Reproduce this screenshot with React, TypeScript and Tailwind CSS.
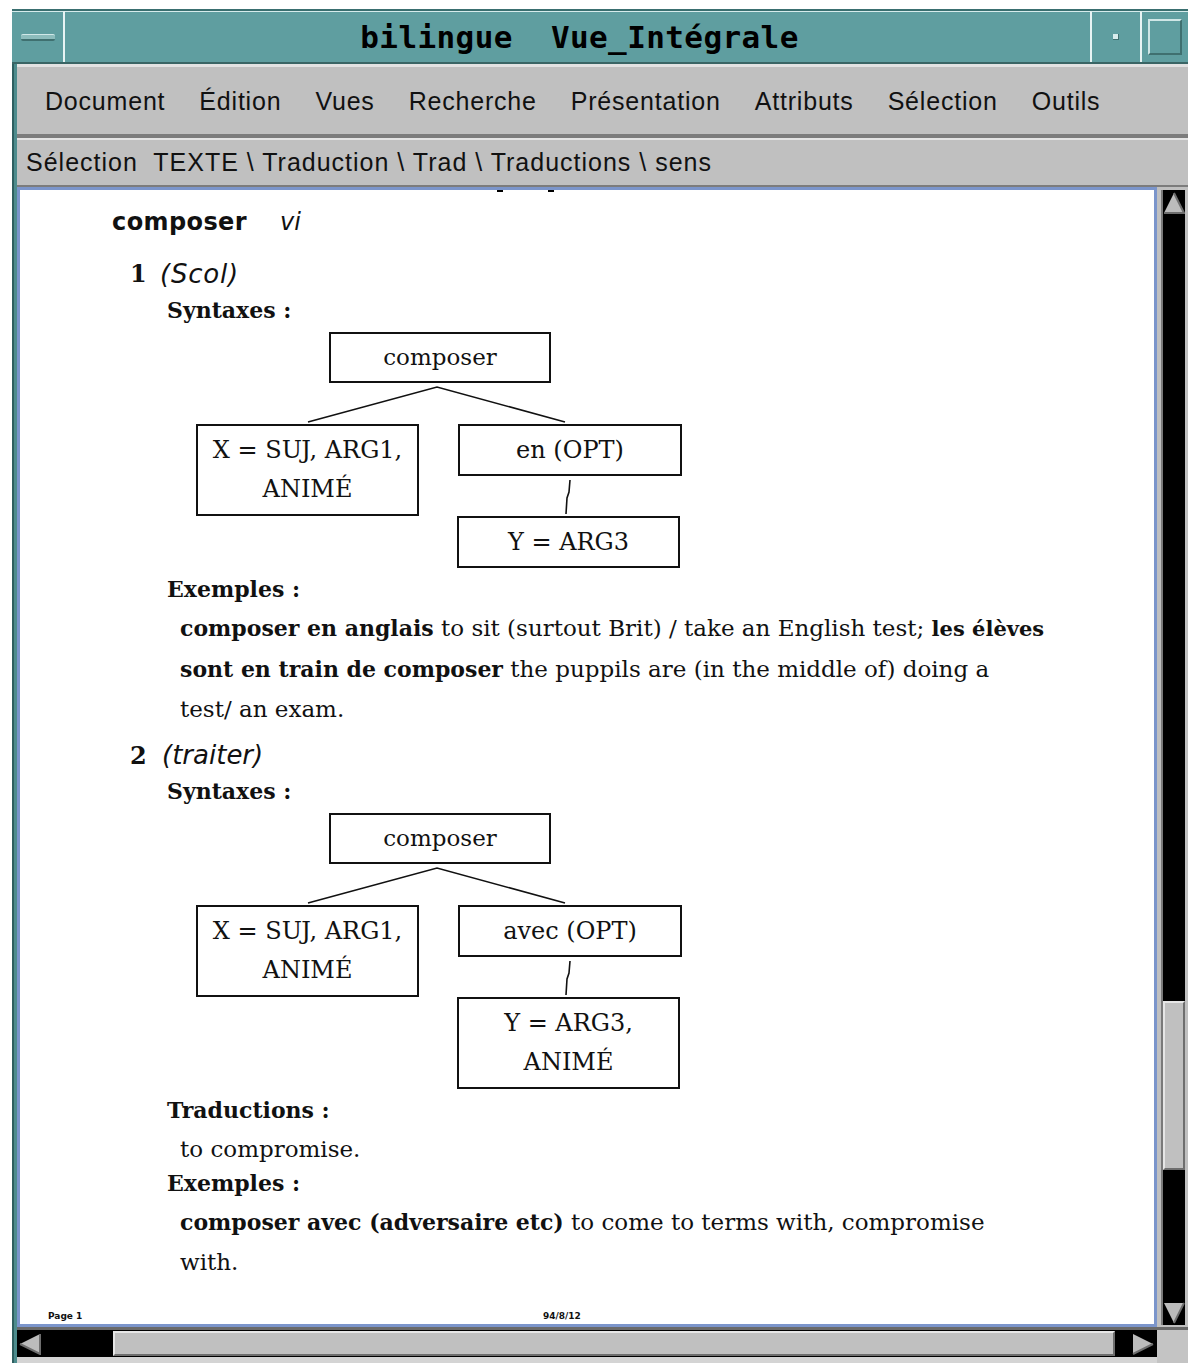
import React from "react";

const serif = "font-['DejaVu_Serif',serif]";
const sans = "font-['DejaVu_Sans',sans-serif]";

function Arrow({ dir }: { dir: "up" | "down" | "left" | "right" }) {
  const pts: Record<string, [string, string]> = {
    up: ["11,1 1,21 21,21", "M11 1 L21 21 L1 21"],
    down: ["1,1 21,1 11,21", "M21 1 L11 21"],
    left: ["1,11 21,1 21,21", "M21 1 L21 21 L1 11"],
    right: ["1,1 21,11 1,21", "M21 11 L1 21"],
  };
  return (
    <svg width="22" height="22" viewBox="0 0 22 22">
      <polygon points={pts[dir][0]} fill="#bcbcbc" />
      <path d={pts[dir][1]} stroke="#6e6e6e" strokeWidth="2" fill="none" />
    </svg>
  );
}

type Node = { x: number; y: number; w: number; h: number; lines: string[]; size: string };

function Diagram({ right, bottom, height }: { right: string; bottom: string[]; height: number }) {
  const nodes: Node[] = [
    { x: 133, y: 0, w: 222, h: 51, lines: ["composer"], size: "text-[23px]" },
    { x: 0, y: 92, w: 223, h: 92, lines: ["X = SUJ, ARG1,", "ANIMÉ"], size: "text-[24px]" },
    { x: 262, y: 92, w: 224, h: 52, lines: [right], size: "text-[24px]" },
    { x: 261, y: 184, w: 223, h: bottom.length > 1 ? 92 : 52, lines: bottom, size: "text-[24px]" },
  ];
  return (
    <div className="relative ml-[176px] w-[490px]" style={{ height }}>
      <svg className="absolute left-0 top-0" width="490" height={height}>
        <path d="M112 90 L241 55 L369 90" stroke="#111" strokeWidth="1.6" fill="none" />
        <path d="M374 148 L373 160 L371 166 L370 182" stroke="#111" strokeWidth="1.6" fill="none" />
      </svg>
      {nodes.map((n, i) => (
        <div
          key={i}
          className={`absolute border-2 border-[#111] bg-white flex flex-col items-center justify-center leading-[39px] text-[#111] ${n.size} ${serif}`}
          style={{ left: n.x, top: n.y, width: n.w, height: n.h }}
        >
          {n.lines.map((l) => (
            <span key={l} className="whitespace-nowrap">{l}</span>
          ))}
        </div>
      ))}
    </div>
  );
}

const menus = ["Document", "Édition", "Vues", "Recherche", "Présentation", "Attributs", "Sélection", "Outils"];

export default function App() {
  return (
    <div className="w-[1188px] h-[1363px] bg-white pt-[9px] pl-[12px] flex flex-col overflow-hidden">
      {/* title bar */}
      <div className="h-[55px] flex bg-[#5f9ea0] border-t-2 border-t-[#3a6f70] border-b-2 border-b-[#3a6565]">
        <div className="w-[53px] border-t border-t-[#d6ecec] border-r-2 border-r-[#e8f4f4] flex items-center justify-center">
          <div className="w-[34px] h-[7px] bg-[#8cbcbc] border-t border-t-[#d0e8e8] border-b-2 border-b-[#3f7070] rounded-[2px]" />
        </div>
        <div className="flex-1 border-t border-t-[#d6ecec] flex items-center justify-center">
          <span className="whitespace-pre font-['DejaVu_Sans_Mono',monospace] font-bold text-[31px] text-black tracking-[0.4px] pl-[4px]">
            bilingue  Vue_Intégrale
          </span>
        </div>
        <div className="w-[50px] border-t border-t-[#d6ecec] border-l-2 border-l-[#e8f4f4] flex items-center justify-center">
          <div className="w-[6px] h-[6px] bg-[#d8ecec] border-b border-r border-[#3f7070]" />
        </div>
        <div className="w-[48px] border-t border-t-[#d6ecec] border-l-2 border-l-[#e8f4f4] flex items-center justify-center">
          <div className="w-[34px] h-[36px] border-2 border-[#cfe6e6] border-b-[#3f7070] border-r-[#3f7070]" />
        </div>
      </div>

      <div className="flex-1 flex">
        {/* left window border */}
        <div className="w-[5px] bg-[#4d8c8d] border-l-2 border-l-[#2e5f60]" />

        <div className="flex-1 flex flex-col">
          {/* menu bar */}
          <div className="h-[74px] bg-[#c0c0c0] border-t-[3px] border-t-[#e2e2e2] border-b-[4px] border-b-[#7c7c7c] flex items-center pt-[3px] pl-[28px] gap-[34px] font-['Liberation_Sans',sans-serif] text-[25px] tracking-[0.8px] text-[#111]">
            {menus.map((m) => (
              <span key={m}>{m}</span>
            ))}
          </div>

          {/* selection bar */}
          <div className="h-[49px] bg-[#c0c0c0] border-t-2 border-t-[#e4e4e4] border-b-2 border-b-[#7c7c7c] flex items-center pl-[9px] font-['Liberation_Sans',sans-serif] text-[25px] tracking-[1px] text-[#111] whitespace-pre">
            Sélection  TEXTE \ Traduction \ Trad \ Traductions \ sens
          </div>

          {/* main area */}
          <div className="flex-1 flex min-h-0">
            <div className="flex-1 bg-white border-[3px] border-[#7b95cb] flex flex-col pt-[14px] text-[#111]">
              <div className="flex h-0 -mt-[14px] mb-[14px]">
                <div className="ml-[477px] w-[6px] h-[2px] bg-black" />
                <div className="ml-[45px] w-[6px] h-[2px] bg-black" />
              </div>

              <div className={`flex items-center h-[36px] pl-[92px] text-[24px] ${sans}`}>
                <span className="w-[168px] font-bold tracking-[0.4px]">composer</span>
                <span className="italic">vi</span>
              </div>

              <div className="flex items-center h-[36px] mt-[16px] pl-[110px]">
                <span className={`w-[30px] font-bold text-[24px] ${serif}`}>1</span>
                <span className={`italic text-[26px] tracking-[0.8px] ${sans}`}>(Scol)</span>
              </div>
              <div className={`h-[36px] leading-[36px] pl-[147px] font-bold text-[22px] ${serif}`}>Syntaxes :</div>

              <div className="mt-[4px]">
                <Diagram right="en (OPT)" bottom={["Y = ARG3"]} height={236} />
              </div>

              <div className={`h-[36px] leading-[36px] mt-[3px] pl-[147px] font-bold text-[22px] ${serif}`}>Exemples :</div>
              <p className={`mt-[1px] pl-[160px] text-[23px] leading-[40px] whitespace-nowrap ${serif}`}>
                <b className="text-[22px]">composer en anglais</b> to sit (surtout Brit) / take an English test;{" "}
                <b className="text-[21px]">les élèves</b>
                <br />
                <b className="text-[22px]">sont en train de composer</b> the puppils are (in the middle of) doing a
                <br />
                test/ an exam.
              </p>

              <div className="flex items-center h-[35px] mt-[9px] pl-[110px]">
                <span className={`w-[32px] font-bold text-[24px] ${serif}`}>2</span>
                <span className={`italic text-[26px] ${sans}`}>(traiter)</span>
              </div>
              <div className={`h-[36px] leading-[36px] pl-[147px] font-bold text-[22px] ${serif}`}>Syntaxes :</div>

              <div className="mt-[4px]">
                <Diagram right="avec (OPT)" bottom={["Y = ARG3,", "ANIMÉ"]} height={276} />
              </div>

              <div className={`h-[36px] leading-[36px] mt-[3px] pl-[147px] font-bold text-[22px] ${serif}`}>Traductions :</div>
              <div className={`h-[32px] leading-[32px] mt-[5px] pl-[160px] text-[23px] ${serif}`}>to compromise.</div>
              <div className={`h-[36px] leading-[36px] pl-[147px] font-bold text-[22px] ${serif}`}>Exemples :</div>
              <p className={`mt-[1px] pl-[160px] text-[23px] leading-[40px] whitespace-nowrap ${serif}`}>
                <b className="text-[22px]">composer avec (adversaire etc)</b> to come to terms with, compromise
                <br />
                with.
              </p>

              <div className={`mt-auto mb-[1px] h-[12px] flex items-center text-[9px] font-bold ${sans}`}>
                <span className="ml-[28px] w-[495px]">Page 1</span>
                <span>94/8/12</span>
              </div>
            </div>

            {/* vertical scrollbar */}
            <div className="w-[31px] bg-[#c0c0c0] pl-[4px] pr-[3px] pt-[3px] pb-[2px] flex">
              <div className="flex-1 bg-black border-l-2 border-l-[#7a7a7a] flex flex-col items-center">
                <div className="pt-[2px]"><Arrow dir="up" /></div>
                <div className="flex-1" />
                <div className="w-[22px] h-[169px] bg-[#c0c0c0] border-2 border-t-[#e6e6e6] border-l-[#e6e6e6] border-b-[#6e6e6e] border-r-[#6e6e6e]" />
                <div className="h-[132px]" />
                <div className="pb-[1px]"><Arrow dir="down" /></div>
              </div>
            </div>
          </div>

          {/* horizontal scrollbar */}
          <div className="h-[36px] flex border-t-[3px] border-t-[#6a6a6a] bg-[#d4d4d4]">
            <div className="flex-1 h-[27px] bg-black flex items-center pl-[2px] pr-[3px]">
              <Arrow dir="left" />
              <div className="w-[72px]" />
              <div className="flex-1 h-[25px] bg-[#c0c0c0] border-2 border-t-[#e6e6e6] border-l-[#e6e6e6] border-b-[#6e6e6e] border-r-[#6e6e6e]" />
              <div className="w-[17px]" />
              <Arrow dir="right" />
            </div>
            <div className="w-[31px] bg-[#c4c4c4]" />
          </div>
        </div>
      </div>
    </div>
  );
}
